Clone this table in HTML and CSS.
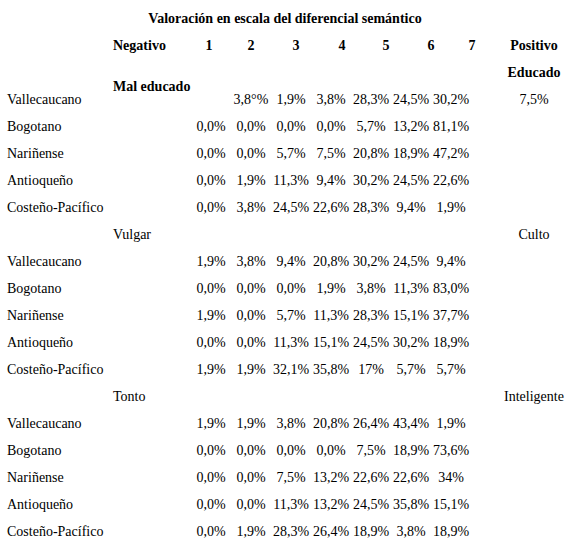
FILE: index.html
```html
<!DOCTYPE html>
<html lang="es">
<head>
<meta charset="utf-8">
<title>Valoración en escala del diferencial semántico</title>
<link rel="stylesheet" href="styles.css">
</head>
<body>
<div class="sheet">
  <div class="title">Valoración en escala del diferencial semántico</div>

  <div class="head">
    <span></span><span class="neg">Negativo</span>
    <span>1</span><span>2</span><span>3</span><span>4</span><span>5</span><span>6</span><span>7</span>
    <span class="hpos">Positivo</span>
  </div>

  <div class="row">
    <span class="pos bold">Educado</span>
  </div>
  <div class="row">
    <span class="lbl">Vallecaucano</span><span class="neg bold raised">Mal educado</span>
    <span></span><span>3,8°%</span><span>1,9%</span><span>3,8%</span><span>28,3%</span><span>24,5%</span><span>30,2%</span>
    <span class="pos">7,5%</span>
  </div>
  <div class="row">
    <span class="lbl">Bogotano</span><span></span>
    <span>0,0%</span><span>0,0%</span><span>0,0%</span><span>0,0%</span><span>5,7%</span><span>13,2%</span><span>81,1%</span>
  </div>
  <div class="row">
    <span class="lbl">Nariñense</span><span></span>
    <span>0,0%</span><span>0,0%</span><span>5,7%</span><span>7,5%</span><span>20,8%</span><span>18,9%</span><span>47,2%</span>
  </div>
  <div class="row">
    <span class="lbl">Antioqueño</span><span></span>
    <span>0,0%</span><span>1,9%</span><span>11,3%</span><span>9,4%</span><span>30,2%</span><span>24,5%</span><span>22,6%</span>
  </div>
  <div class="row">
    <span class="lbl">Costeño-Pacífico</span><span></span>
    <span>0,0%</span><span>3,8%</span><span>24,5%</span><span>22,6%</span><span>28,3%</span><span>9,4%</span><span>1,9%</span>
  </div>

  <div class="row">
    <span></span><span class="neg">Vulgar</span>
    <span class="pos">Culto</span>
  </div>
  <div class="row">
    <span class="lbl">Vallecaucano</span><span></span>
    <span>1,9%</span><span>3,8%</span><span>9,4%</span><span>20,8%</span><span>30,2%</span><span>24,5%</span><span>9,4%</span>
  </div>
  <div class="row">
    <span class="lbl">Bogotano</span><span></span>
    <span>0,0%</span><span>0,0%</span><span>0,0%</span><span>1,9%</span><span>3,8%</span><span>11,3%</span><span>83,0%</span>
  </div>
  <div class="row">
    <span class="lbl">Nariñense</span><span></span>
    <span>1,9%</span><span>0,0%</span><span>5,7%</span><span>11,3%</span><span>28,3%</span><span>15,1%</span><span>37,7%</span>
  </div>
  <div class="row">
    <span class="lbl">Antioqueño</span><span></span>
    <span>0,0%</span><span>0,0%</span><span>11,3%</span><span>15,1%</span><span>24,5%</span><span>30,2%</span><span>18,9%</span>
  </div>
  <div class="row">
    <span class="lbl">Costeño-Pacífico</span><span></span>
    <span>1,9%</span><span>1,9%</span><span>32,1%</span><span>35,8%</span><span>17%</span><span>5,7%</span><span>5,7%</span>
  </div>

  <div class="row">
    <span></span><span class="neg">Tonto</span>
    <span class="pos">Inteligente</span>
  </div>
  <div class="row">
    <span class="lbl">Vallecaucano</span><span></span>
    <span>1,9%</span><span>1,9%</span><span>3,8%</span><span>20,8%</span><span>26,4%</span><span>43,4%</span><span>1,9%</span>
  </div>
  <div class="row">
    <span class="lbl">Bogotano</span><span></span>
    <span>0,0%</span><span>0,0%</span><span>0,0%</span><span>0,0%</span><span>7,5%</span><span>18,9%</span><span>73,6%</span>
  </div>
  <div class="row">
    <span class="lbl">Nariñense</span><span></span>
    <span>0,0%</span><span>0,0%</span><span>7,5%</span><span>13,2%</span><span>22,6%</span><span>22,6%</span><span>34%</span>
  </div>
  <div class="row">
    <span class="lbl">Antioqueño</span><span></span>
    <span>0,0%</span><span>0,0%</span><span>11,3%</span><span>13,2%</span><span>24,5%</span><span>35,8%</span><span>15,1%</span>
  </div>
  <div class="row">
    <span class="lbl">Costeño-Pacífico</span><span></span>
    <span>0,0%</span><span>1,9%</span><span>28,3%</span><span>26,4%</span><span>18,9%</span><span>3,8%</span><span>18,9%</span>
  </div>
</div>
</body>
</html>
```

FILE: styles.css
```css
html, body {
  margin: 0;
  padding: 0;
  background: #ffffff;
}

body {
  font-family: "Liberation Serif", "Times New Roman", serif;
  font-size: 14px;
  color: #000000;
}

.sheet {
  width: 578px;
  padding-top: 5px;
}

.title {
  width: 570px;
  height: 27px;
  line-height: 27px;
  text-align: center;
  font-weight: bold;
}

.head,
.row {
  display: grid;
  height: 27px;
  line-height: 27px;
  white-space: nowrap;
}

.head {
  grid-template-columns: 113px 75px 42px 42px 48px 44px 44px 46px 36px 88px;
  font-weight: bold;
  text-align: center;
}

.row {
  grid-template-columns: 113px 78px repeat(7, 40px) 19px 88px;
  text-align: center;
}

.head .neg,
.row .neg {
  text-align: left;
}

.lbl {
  text-align: left;
  padding-left: 7px;
}

.hpos {
  grid-column: 10;
  text-align: center;
}

.pos {
  grid-column: 11;
  text-align: center;
}

.bold {
  font-weight: bold;
}

.raised {
  margin-top: -13px;
}
```
